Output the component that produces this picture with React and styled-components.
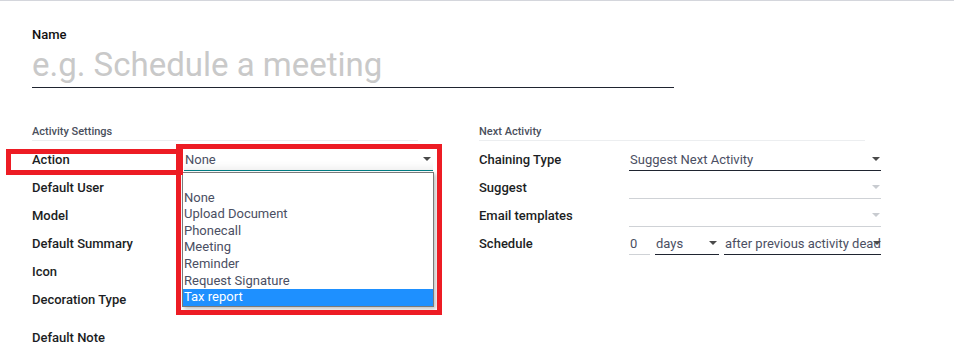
import React from "react";
import styled, { createGlobalStyle } from "styled-components";

const GlobalStyle = createGlobalStyle`
  body {
    margin: 0;
    background: #fff;
    font-family: Roboto, "Noto Sans", sans-serif;
    font-size: 13px;
    color: #212529;
  }
`;

const Sheet = styled.div`
  position: relative;
  width: 954px;
  height: 344px;
  box-sizing: border-box;
  border-top: 1px solid #d4d6dc;
  padding: 27px 0 0 32px;
  overflow: hidden;
`;

const NameLabel = styled.div`
  font-weight: 500;
  font-size: 13px;
  line-height: 14px;
  color: #111;
`;

const TitleInput = styled.div`
  width: 642px;
  height: 46px;
  box-sizing: border-box;
  border-bottom: 1px solid #1f2430;
  font-size: 33px;
  line-height: 40px;
  color: #c9c9c9;
  padding-top: 3px;
`;

const Groups = styled.div`
  display: grid;
  grid-template-columns: 401px 402px;
  column-gap: 46px;
  margin-top: 37px;
`;

const Group = styled.div`
  display: flex;
  flex-direction: column;
`;

const SectionTitle = styled.div`
  width: 386px;
  font-size: 11px;
  font-weight: 500;
  color: #4a4f5c;
  line-height: 13px;
  padding-bottom: 2px;
  border-bottom: 1px solid #eceef0;
  margin-bottom: 4px;
`;

const Row = styled.div`
  display: grid;
  grid-template-columns: ${(p) => p.$labelWidth}px 1fr;
  align-items: center;
  height: 28px;
  margin-top: ${(p) => p.$gap || 0}px;
`;

const Label = styled.div`
  font-weight: 500;
  font-size: 13px;
  color: #1c1e24;
  white-space: nowrap;
`;

const Field = styled.div`
  position: relative;
  display: flex;
  align-items: center;
  height: 24px;
  box-sizing: border-box;
  padding: 2px 0 0 1px;
  border-bottom: 1px solid ${(p) => (p.$focus ? "#017e84" : p.$muted ? "#cfd2d6" : "#1f2430")};
  box-shadow: ${(p) => (p.$focus ? "inset 0 -8px 8px -6px rgba(0,0,0,0.08)" : "none")};
  width: ${(p) => (p.$width ? `${p.$width}px` : "auto")};
  color: #4b4f63;
  font-size: 13px;
  white-space: nowrap;
  overflow: hidden;
`;

const Arrow = styled.span`
  position: absolute;
  right: ${(p) => p.$right ?? 1}px;
  top: 10px;
  width: 0;
  height: 0;
  border-left: 4px solid transparent;
  border-right: 4px solid transparent;
  border-top: 4px solid ${(p) => (p.$muted ? "#c8cbd0" : "#4a4a4a")};
`;

const Inline = styled.div`
  display: flex;
  gap: 5px;
  align-items: center;
`;

const OptionList = styled.div`
  position: absolute;
  left: -2px;
  top: 25px;
  width: 252px;
  box-sizing: border-box;
  border: 1px solid #7a7a7a;
  background: #fff;
  box-shadow: 2px 2px 4px rgba(0, 0, 0, 0.25);
  z-index: 2;
`;

const Option = styled.div`
  height: 16.6px;
  line-height: 16.6px;
  padding-left: 1px;
  font-size: 13px;
  color: ${(p) => (p.$active ? "#fff" : "#4b4f63")};
  background: ${(p) => (p.$active ? "#1e90ff" : "transparent")};
`;

const SelectWrap = styled.div`
  position: relative;
  width: 249px;
`;

const Marker = styled.div`
  position: absolute;
  left: ${(p) => p.$x}px;
  top: ${(p) => p.$y}px;
  width: ${(p) => p.$w}px;
  height: ${(p) => p.$h}px;
  box-sizing: border-box;
  border: 5px solid #ed1c24;
  z-index: 3;
`;

const actions = ["", "None", "Upload Document", "Phonecall", "Meeting", "Reminder", "Request Signature", "Tax report"];

export default function App() {
  return (
    <>
      <GlobalStyle />
      <Sheet>
        <NameLabel>Name</NameLabel>
        <TitleInput>e.g. Schedule a meeting</TitleInput>
        <Groups>
          <Group>
            <SectionTitle>Activity Settings</SectionTitle>
            <Row $labelWidth={152}>
              <Label>Action</Label>
              <SelectWrap>
                <Field $focus>
                  None
                  <Arrow $right={2} />
                </Field>
                <OptionList>
                  {actions.map((a, i) => (
                    <Option key={i} $active={a === "Tax report"}>{a}</Option>
                  ))}
                </OptionList>
              </SelectWrap>
            </Row>
            <Row $labelWidth={152}><Label>Default User</Label><div /></Row>
            <Row $labelWidth={152}><Label>Model</Label><div /></Row>
            <Row $labelWidth={152}><Label>Default Summary</Label><div /></Row>
            <Row $labelWidth={152}><Label>Icon</Label><div /></Row>
            <Row $labelWidth={152}><Label>Decoration Type</Label><div /></Row>
            <Row $labelWidth={152} $gap={10}><Label>Default Note</Label><div /></Row>
          </Group>
          <Group>
            <SectionTitle>Next Activity</SectionTitle>
            <Row $labelWidth={150}>
              <Label>Chaining Type</Label>
              <Field $width={252}>
                Suggest Next Activity
                <Arrow />
              </Field>
            </Row>
            <Row $labelWidth={150}>
              <Label>Suggest</Label>
              <Field $width={252} $muted>
                <Arrow $muted />
              </Field>
            </Row>
            <Row $labelWidth={150}>
              <Label>Email templates</Label>
              <Field $width={252} $muted>
                <Arrow $muted />
              </Field>
            </Row>
            <Row $labelWidth={150}>
              <Label>Schedule</Label>
              <Inline>
                <Field $width={21} $muted>0</Field>
                <Field $width={64}>
                  days
                  <Arrow $right={2} />
                </Field>
                <Field $width={157}>
                  after previous activity deadline
                  <Arrow $right={0} />
                </Field>
              </Inline>
            </Row>
          </Group>
        </Groups>
        <Marker $x={6} $y={148} $w={177} $h={26} />
        <Marker $x={176} $y={143} $w={266} $h={171} />
      </Sheet>
    </>
  );
}
